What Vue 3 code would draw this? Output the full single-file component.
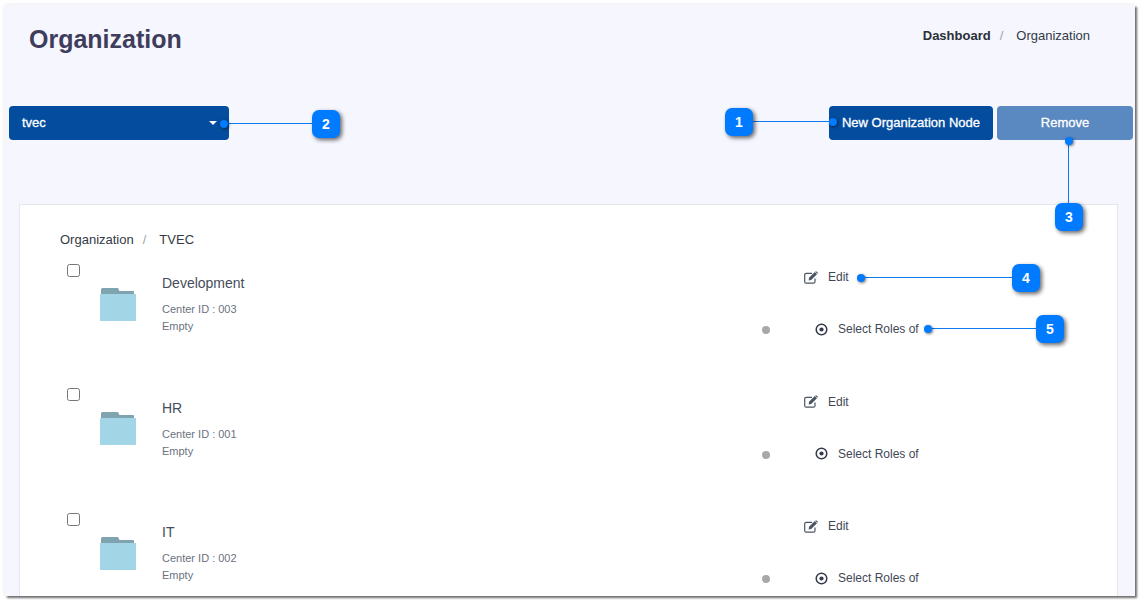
<script setup>
const rows = [
  { name: 'Development', id: '003' },
  { name: 'HR', id: '001' },
  { name: 'IT', id: '002' },
]
const callouts = [
  { n: 1, cls: 'c1' },
  { n: 2, cls: 'c2' },
  { n: 3, cls: 'c3' },
  { n: 4, cls: 'c4' },
  { n: 5, cls: 'c5' },
]
</script>

<template>
  <div class="stage">
    <div class="window">
      <header class="head">
        <h1 class="title">Organization</h1>
        <nav class="crumbs">
          <span class="strong">Dashboard</span>
          <span class="sep">/</span>
          <span>Organization</span>
        </nav>
      </header>

      <div class="toolbar">
        <div class="select">
          <span>tvec</span>
          <i class="caret"></i>
        </div>
        <div class="actions">
          <button class="btn primary">New Organization Node</button>
          <button class="btn faded">Remove</button>
        </div>
      </div>

      <section class="card">
        <nav class="crumbs inner">
          <span>Organization</span>
          <span class="sep">/</span>
          <span>TVEC</span>
        </nav>
        <div v-for="r in rows" :key="r.name" class="row">
          <span class="check"></span>
          <svg class="folder" width="36" height="33" viewBox="0 0 36 33">
            <path d="M1 1.500Q1 0 2.500 0H18L19.500 3H33Q34 3 34 4V6H1Z" fill="#7fa4b0" />
            <path d="M0 6H36V33H0Z" fill="#a2d5e6" />
          </svg>
          <div class="info">
            <div class="name">{{ r.name }}</div>
            <div class="meta first">Center ID : {{ r.id }}</div>
            <div class="meta">Empty</div>
          </div>
          <div class="side">
            <div class="edit">
              <svg width="15" height="13" viewBox="0 0 15 13">
                <path d="M11 7.500V10.700Q11 12.200 9.500 12.200H2.200Q.7 12.200 .7 10.700V3.800Q.7 2.300 2.200 2.300H8" fill="none" stroke="#4b5563" stroke-width="1.200" />
                <path d="M5 6.800L10.800 1L13 3.200L7.200 9L4.700 9.400Z" fill="#4b5563" />
                <path d="M11.500.4Q12 0 12.500.4L13.700 1.600Q14 2 13.700 2.500L13.400 2.800L11.200 .7Z" fill="#4b5563" />
              </svg>
              <span>Edit</span>
            </div>
            <div class="roles">
              <i class="dot"></i>
              <svg class="target" width="13" height="13" viewBox="0 0 13 13">
                <circle cx="6.500" cy="6.500" r="5.300" fill="none" stroke="#343a4a" stroke-width="1.500" />
                <circle cx="6.500" cy="6.500" r="2.100" fill="#343a4a" />
              </svg>
              <span>Select Roles of</span>
            </div>
          </div>
        </div>
      </section>
    </div>

    <i class="line l1"></i>
    <i class="line l2"></i>
    <i class="line l3"></i>
    <i class="line l4"></i>
    <i class="line l5"></i>
    <i class="pin p1"></i>
    <i class="pin p2"></i>
    <i class="pin p3"></i>
    <i class="pin p4"></i>
    <i class="pin p5"></i>
    <div v-for="c in callouts" :key="c.n" class="callout" :class="c.cls">{{ c.n }}</div>
  </div>
</template>

<style>
html, body { margin: 0; background: #fff; overflow: hidden; }
</style>

<style scoped>
.stage {
  position: relative;
  width: 1145px;
  height: 606px;
  padding: 5px 10px 10px 5px;
  box-sizing: border-box;
  overflow: hidden;
  font-family: "Liberation Sans", Arial, sans-serif;
  background: #fff;
}
.window {
  height: 591px;
  width: 1130px;
  background: #f5f6fe;
  box-shadow: 2px 2px 2px rgba(0,0,0,.55), 0 0 4px rgba(0,0,0,.1);
  overflow: hidden;
}
.head {
  display: flex;
  justify-content: space-between;
  height: 101px;
  padding: 0 45px 0 24px;
}
.title {
  margin: 18px 0 0;
  font: 700 25px/32px "Liberation Sans", Arial, sans-serif;
  color: #3f3d5c;
}
.crumbs {
  display: flex;
  font-size: 13px;
  line-height: 20px;
  color: #333a45;
}
.head .crumbs { margin-top: 21px; }
.strong { font-weight: 700; color: #2b2f38; }
.sep { margin: 0 13px 0 9px; color: #a0a4ab; }
.toolbar {
  display: flex;
  justify-content: space-between;
  padding: 0 2px 0 4px;
}
.select {
  width: 220px;
  height: 34px;
  box-sizing: border-box;
  padding: 0 13px 1px;
  display: flex;
  align-items: center;
  justify-content: space-between;
  background: #034c9e;
  border-radius: 4px;
  color: #fff;
  font-size: 13px;
  -webkit-text-stroke: .3px #fff;
}
.caret {
  width: 0;
  height: 0;
  margin-right: -1px;
  border: 4px solid transparent;
  border-top-color: #fff;
  border-bottom: 0;
}
.actions { display: flex; gap: 4px; }
.btn {
  height: 34px;
  border: 0;
  border-radius: 4px;
  color: #fff;
  font: 400 13px/34px "Liberation Sans", Arial, sans-serif;
  -webkit-text-stroke: .3px #fff;
  padding: 0;
}
.primary { width: 164px; background: #034c9e; }
.faded { width: 136px; background: #5a88c1; }
.card {
  margin: 64px 17px 0 14px;
  height: 401px;
  box-sizing: border-box;
  background: #fff;
  border: 1px solid #e5e6ec;
  padding: 25px 0 0;
}
.inner { padding-left: 40px; margin-bottom: 4.800px; }
.row {
  position: relative;
  display: flex;
  height: 124.500px;
}
.check {
  width: 11px;
  height: 11px;
  margin: 9px 0 0 47px;
  border: 1px solid #767676;
  border-radius: 2.500px;
  background: #fff;
}
.folder { margin: 32.800px 0 0 20px; }
.info { margin: 17.300px 0 0 26px; width: 581px; }
.name { font-size: 14px; line-height: 22px; color: #454d5b; }
.meta { font-size: 11px; line-height: 17px; color: #6b7280; }
.meta.first { margin-top: 7px; }
.side {
  flex: 1;
  font-size: 12px;
  color: #3f4756;
}
.edit {
  display: flex;
  align-items: center;
  gap: 9px;
  height: 20px;
  margin: 12.300px 0 0 61px;
}
.roles {
  position: relative;
  display: flex;
  align-items: center;
  height: 20px;
  margin: 32px 0 0 72px;
}
.target { margin-right: 10px; }
.dot {
  position: absolute;
  left: -53px;
  top: 7px;
  width: 8px;
  height: 8px;
  border-radius: 50%;
  background: #a8a8a8;
}
.callout {
  position: absolute;
  width: 28px;
  height: 28px;
  border-radius: 7px;
  background: #007bff;
  color: #fff;
  font: 700 14px/28px "Liberation Sans", sans-serif;
  text-align: center;
  box-shadow: 2px 2px 4px rgba(0,0,0,.6);
}
.c1 { left: 725px; top: 108px; }
.c2 { left: 312px; top: 110px; }
.c3 { left: 1055px; top: 203px; }
.c4 { left: 1012px; top: 264px; }
.c5 { left: 1036px; top: 315px; }
.line { position: absolute; background: #0b7bf0; }
.l1 { left: 752px; top: 121px; width: 80px; height: 1px; }
.l2 { left: 224px; top: 123px; width: 90px; height: 1px; }
.l3 { left: 1068px; top: 140px; width: 1px; height: 64px; }
.l4 { left: 860px; top: 277px; width: 154px; height: 1px; }
.l5 { left: 928px; top: 328px; width: 110px; height: 1px; }
.pin {
  position: absolute;
  width: 8px;
  height: 8px;
  border-radius: 50%;
  background: #007bff;
  box-shadow: 1px 1px 3px rgba(0,0,0,.55);
}
.p1 { left: 829px; top: 118px; }
.p2 { left: 220px; top: 120px; }
.p3 { left: 1065px; top: 137px; }
.p4 { left: 857px; top: 274px; }
.p5 { left: 924px; top: 325px; }
</style>
